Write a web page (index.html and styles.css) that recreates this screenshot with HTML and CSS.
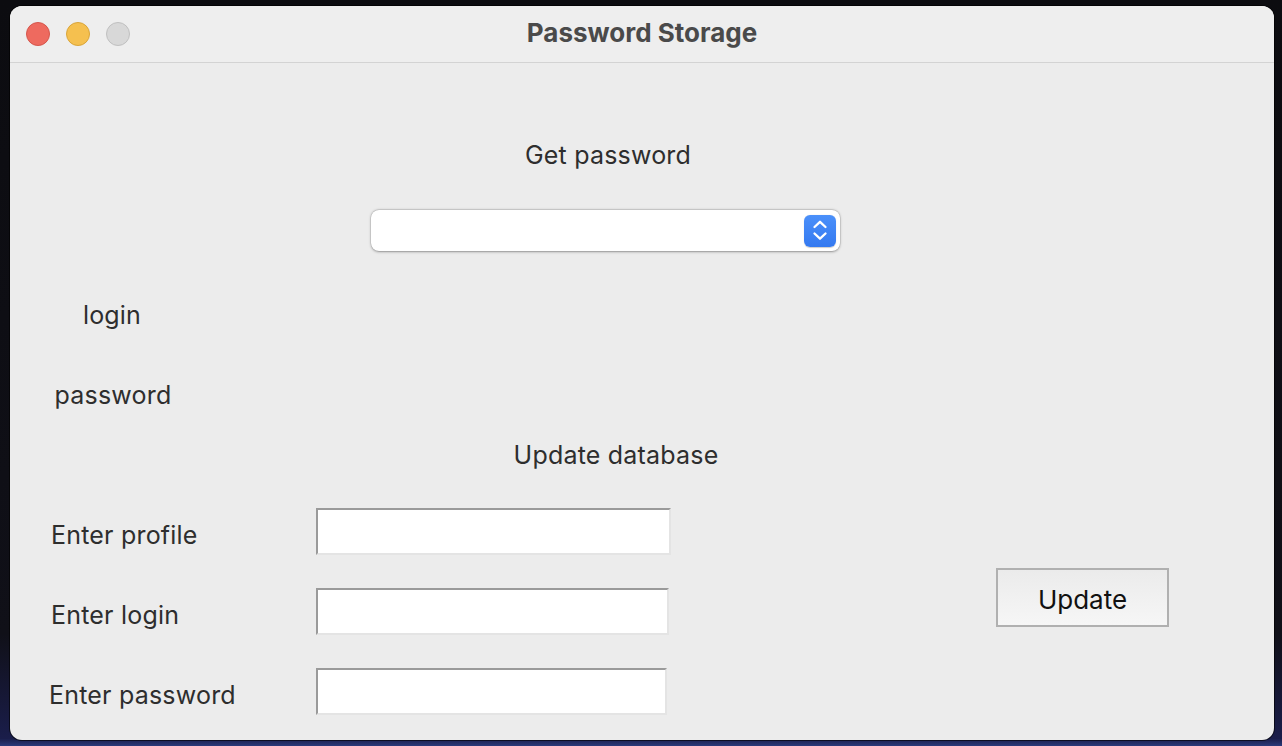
FILE: index.html
```html
<!DOCTYPE html>
<html>
<head>
<meta charset="utf-8">
<title>Password Storage</title>
<link rel="stylesheet" href="styles.css">
</head>
<body>
<div class="desktop">
  <div class="window">
    <div class="titlebar">
      <div class="lights">
        <span class="light red"></span>
        <span class="light yellow"></span>
        <span class="light gray"></span>
      </div>
      <div class="title">Password Storage</div>
    </div>
    <div class="content">
      <div class="heading get">Get password</div>
      <div class="combo">
        <div class="stepper">
          <svg width="32" height="32" viewBox="0 0 32 32">
            <path d="M10.5 12 L16 6.8 L21.5 12" fill="none" stroke="#fff" stroke-width="2.3" stroke-linecap="round" stroke-linejoin="round"/>
            <path d="M10.5 18.5 L16 23.7 L21.5 18.5" fill="none" stroke="#fff" stroke-width="2.3" stroke-linecap="round" stroke-linejoin="round"/>
          </svg>
        </div>
      </div>
      <div class="info login">login</div>
      <div class="info password">password</div>
      <div class="heading update">Update database</div>
      <div class="form">
        <div class="label">Enter profile</div>
        <div class="field f1"></div>
        <div class="label">Enter login</div>
        <div class="field f2"></div>
        <div class="label lp">Enter password</div>
        <div class="field f3"></div>
        <div class="btn">Update</div>
      </div>
    </div>
  </div>
</div>
</body>
</html>
```

FILE: styles.css
```css
* { box-sizing: border-box; }
html, body { margin: 0; padding: 0; }
body {
  width: 1282px;
  height: 746px;
  overflow: hidden;
  font-family: Inter, "Noto Sans", sans-serif;
}
.desktop {
  width: 1282px;
  height: 746px;
  background: linear-gradient(180deg, #0c0c10 0%, #101018 85%, #1a1d4a 99%, #2a3a7a 100%);
  padding: 6px 8px 6px 10px;
}
.window {
  width: 1264px;
  height: 734px;
  border-radius: 12px;
  overflow: hidden;
  background: #ececec;
  display: flex;
  flex-direction: column;
  box-shadow: 0 0 0 1px rgba(0,0,0,0.6);
}
.titlebar {
  height: 57px;
  flex: none;
  background: #eeeeee;
  border-bottom: 1px solid #d3d3d3;
  display: flex;
  align-items: center;
  position: relative;
}
.lights {
  display: flex;
  gap: 16px;
  padding-left: 16px;
}
.light {
  width: 24px;
  height: 24px;
  border-radius: 50%;
  display: block;
}
.red { background: #ee6a5f; border: 1px solid #d5564c; }
.yellow { background: #f5c04f; border: 1px solid #d9a53a; }
.gray { background: #d8d8d8; border: 1px solid #c0c0c0; }
.title {
  position: absolute;
  left: 0;
  right: 0;
  top: 0;
  height: 56px;
  line-height: 54px;
  text-align: center;
  font-weight: 700;
  font-size: 26px;
  color: #4a4a4a;
  pointer-events: none;
}
.content {
  flex: 1;
  display: flex;
  flex-direction: column;
  color: #2e2e2e;
  font-size: 25px;
  letter-spacing: 0.2px;
}
.heading, .info {
  height: 30px;
  line-height: 30px;
  text-align: center;
}
.get { width: 1196px; margin-top: 77px; }
.combo {
  margin-top: 40px;
  margin-left: 361px;
  width: 469px;
  height: 41px;
  background: #ffffff;
  border-radius: 8px;
  box-shadow: 0 0.5px 2.5px rgba(0,0,0,0.35), 0 0 0 0.5px rgba(0,0,0,0.12);
  display: flex;
  justify-content: flex-end;
  align-items: center;
  padding-right: 4px;
}
.stepper {
  width: 32px;
  height: 32px;
  border-radius: 6px;
  background: linear-gradient(180deg, #4b90fa 0%, #3479f0 100%);
  box-shadow: 0 0.5px 1px rgba(0,0,0,0.2);
}
.stepper svg { display: block; }
.login { width: 204px; margin-top: 49px; }
.password { width: 206px; margin-top: 50px; }
.update { width: 1212px; margin-top: 30px; }
.form {
  margin-top: 38px;
  display: grid;
  grid-template-columns: 265px 355px 173px;
  grid-template-rows: 47px 47px 47px;
  row-gap: 33px;
  padding-left: 41px;
}
.label {
  grid-column: 1;
  line-height: 30px;
  padding-top: 12px;
}
.label.lp { margin-left: -2px; }
.field {
  grid-column: 2;
  height: 47px;
  background: #ffffff;
  border-top: 2px solid #9a9a9a;
  border-left: 2px solid #9a9a9a;
  border-right: 2px solid #e4e4e4;
  border-bottom: 2px solid #e4e4e4;
}
.f1 { grid-row: 1; width: 355px; }
.f2 { grid-row: 2; width: 353px; }
.f3 { grid-row: 3; width: 351px; }
.btn {
  grid-column: 3;
  grid-row: 1 / span 3;
  align-self: start;
  margin-top: 60px;
  margin-left: 325px;
  width: 173px;
  height: 59px;
  border: 2px solid #b0b0b0;
  background: linear-gradient(180deg, #ebebeb 0%, #f6f6f6 100%);
  color: #111;
  display: flex;
  align-items: center;
  justify-content: center;
  font-size: 26px;
  letter-spacing: 0;
  padding-top: 4px;
}
```
